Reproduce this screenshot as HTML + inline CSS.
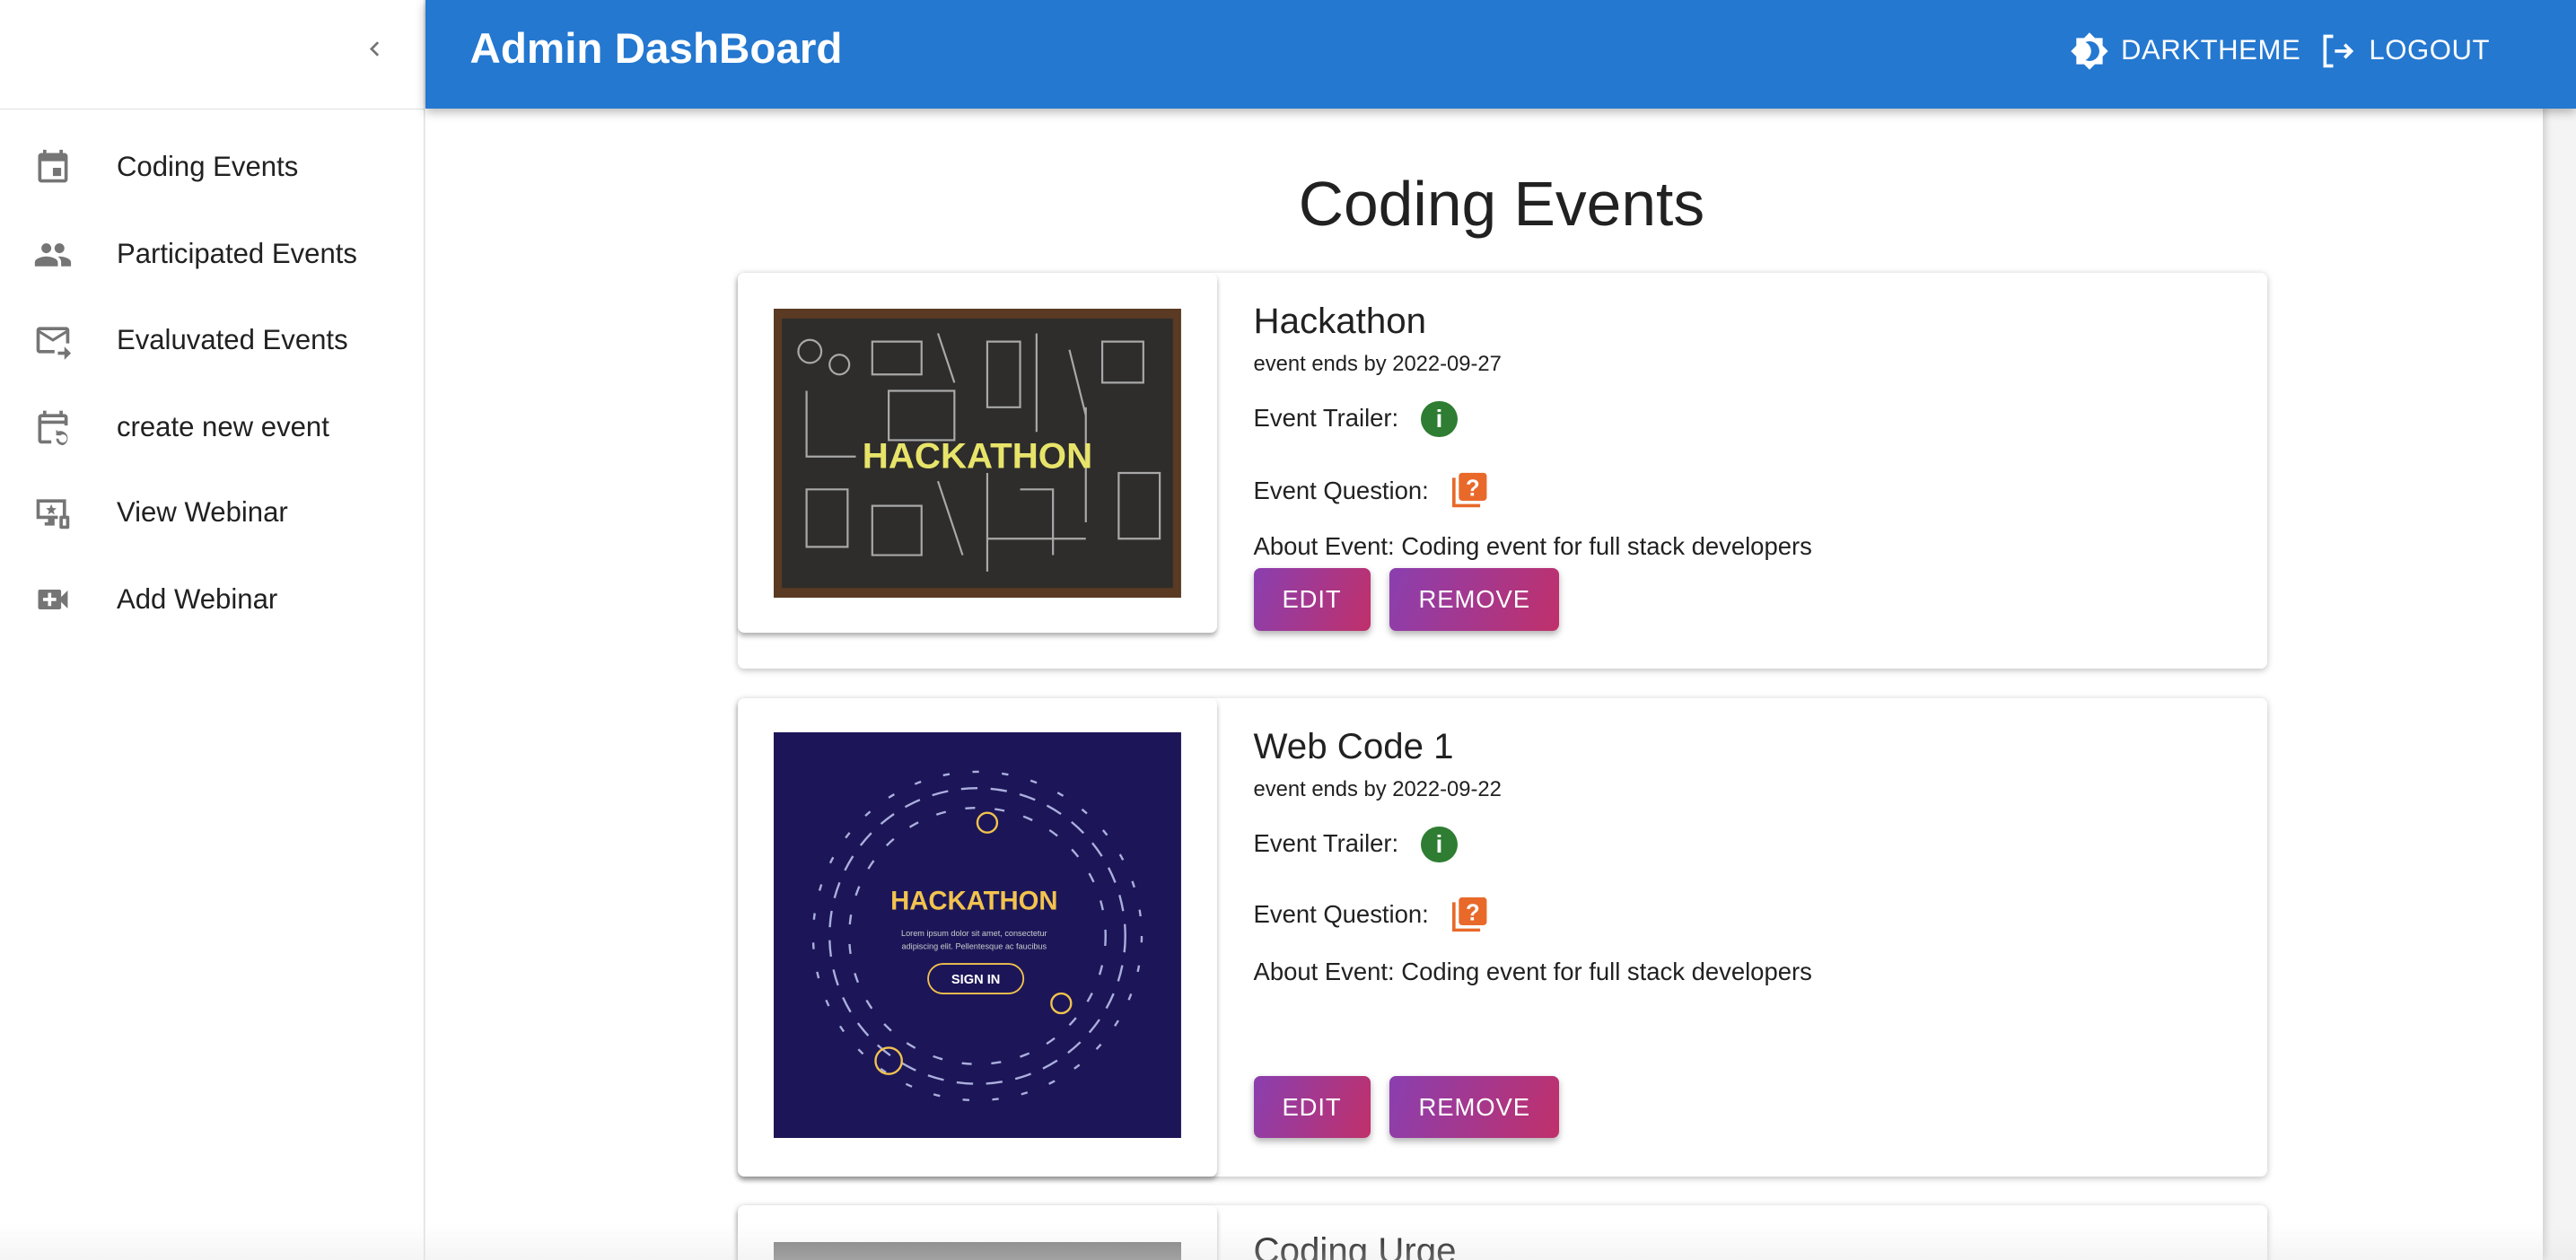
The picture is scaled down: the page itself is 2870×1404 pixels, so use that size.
<!DOCTYPE html>
<html><head><meta charset="utf-8"><style>
html,body{margin:0;padding:0;overflow:hidden;background:#fff}
body{width:2870px;height:1404px}
#w{zoom:1.83036;width:1568px;height:767px;position:relative;font-family:"Liberation Sans",sans-serif;color:#212121;overflow:hidden;background:#f4f4f4}
.abs{position:absolute}
#side{left:0;top:0;width:258px;height:767px;background:#fff;border-right:1px solid #e0e0e0}
#sidetop{left:0;top:0;width:258px;height:66px;border-bottom:1px solid #e0e0e0}
.mi{position:absolute;left:0;width:258px;height:40px}
.mi svg{position:absolute;left:20px;top:9px;width:24px;height:24px;fill:#757575}
.mi span{position:absolute;left:71px;top:11px;font-size:17px}
#main{left:259px;top:0;width:1289px;height:767px;background:#fff;box-shadow:2px 0 4px rgba(0,0,0,.15)}
#bar{left:259px;top:0;width:1309px;height:66px;background:#2478d0;box-shadow:0 2px 6px rgba(0,0,0,.3);color:#fff}
.card{position:absolute;left:449px;width:931px;background:#fff;border-radius:4px;box-shadow:0 1px 4px rgba(0,0,0,.25)}
.ic{position:absolute;left:0;top:0;width:292px;background:#fff;border-radius:4px;box-shadow:0 2px 3px rgba(0,0,0,.3)}
.img{position:absolute;left:22px;top:22px;width:248px}
.t{position:absolute;left:314px;font-size:22px}
.d{position:absolute;left:314px;font-size:13px}
.l{position:absolute;left:314px;font-size:15px}
.btn{position:absolute;height:38px;border-radius:4px;background:linear-gradient(110deg,#8a3fb0,#c0306a);color:#fff;font-size:15px;text-align:center;line-height:38px;letter-spacing:.5px;box-shadow:0 2px 4px rgba(0,0,0,.3)}
.gi{position:absolute;width:22px;height:22px;border-radius:50%;background:#2e7d32;color:#fff;font-weight:bold;font-size:15px;text-align:center;line-height:22px}
.qi{position:absolute;width:22px;height:22px}
</style></head><body><div id="w">
<div id="main" class="abs"></div>
<div id="side" class="abs">
 <div id="sidetop" class="abs"><svg class="abs" style="left:219px;top:21px" width="18" height="18" viewBox="0 0 24 24"><path d="M15.4 7.4 14 6l-6 6 6 6 1.4-1.4L10.8 12z" fill="#757575"/></svg></div>
 <div class="mi" style="top:81px"><svg viewBox="0 0 24 24"><path d="M17 12h-5v5h5v-5zM16 1v2H8V1H6v2H5c-1.1 0-2 .9-2 2v14c0 1.1.9 2 2 2h14c1.1 0 2-.9 2-2V5c0-1.1-.9-2-2-2h-1V1h-2zm3 18H5V8h14v11z"/></svg><span>Coding Events</span></div>
 <div class="mi" style="top:134px"><svg viewBox="0 0 24 24"><path d="M16 11c1.66 0 2.99-1.34 2.99-3S17.66 5 16 5s-3 1.34-3 3 1.34 3 3 3zm-8 0c1.66 0 2.99-1.34 2.99-3S9.66 5 8 5 5 6.34 5 8s1.34 3 3 3zm0 2c-2.33 0-7 1.17-7 3.5V19h14v-2.5c0-2.33-4.67-3.5-7-3.5zm8 0c-.29 0-.62.02-.97.05 1.16.84 1.97 1.97 1.97 3.45V19h6v-2.5c0-2.33-4.67-3.5-7-3.5z"/></svg><span>Participated Events</span></div>
 <div class="mi" style="top:186px"><svg viewBox="0 0 24 24"><path d="M22 14V6c0-1.1-.9-2-2-2H4c-1.1 0-2 .9-2 2v12c0 1.1.9 2 2 2h9v-2H4V8l8 5 8-5v6h2zM12 11 4 6h16l-8 5zm7 5 4 4-4 4v-3h-4v-2h4v-3z"/></svg><span>Evaluvated Events</span></div>
 <div class="mi" style="top:239px"><svg viewBox="0 0 24 24"><path d="M5 8h14V6H5v2zm0 12h6v2H5c-1.1 0-2-.9-2-2V6c0-1.1.9-2 2-2h1V2h2v2h8V2h2v2h1c1.1 0 2 .9 2 2v5h-2V10H5v10zm13 3c-2.2 0-4-1.8-4-4h1.5a2.5 2.5 0 1 0 .7-1.8L17.5 17H14v-3.5l1.1 1.1A4 4 0 1 1 18 23z"/></svg><span>create new event</span></div>
 <div class="mi" style="top:291px"><svg viewBox="0 0 24 24"><path d="M21 14h-1V4H2v12h7v2H7v2h6v-4h2v-2H4V6h14v8h-1a1 1 0 0 0-1 1v6a1 1 0 0 0 1 1h4a1 1 0 0 0 1-1v-6a1 1 0 0 0-1-1zm-1 6h-2v-4h2v4zM11 7l.9 2.3 2.3.2-1.8 1.5.6 2.3-2-1.3-2 1.3.6-2.3-1.8-1.5 2.3-.2z"/></svg><span>View Webinar</span></div>
 <div class="mi" style="top:344px"><svg viewBox="0 0 24 24"><path d="M17 10.5V7c0-.55-.45-1-1-1H4c-.55 0-1 .45-1 1v10c0 .55.45 1 1 1h12c.55 0 1-.45 1-1v-3.5l4 4v-11l-4 4zM14 13h-3v3H9v-3H6v-2h3V8h2v3h3v2z"/></svg><span>Add Webinar</span></div>
</div>
<div id="bar" class="abs">
 <div class="abs" style="left:27px;top:15px;font-size:26px;font-weight:bold">Admin DashBoard</div>
 <svg class="abs" style="left:1001px;top:19px" width="24" height="24" viewBox="0 0 24 24"><path fill="#fff" d="M20 8.69V4h-4.69L12 .69 8.69 4H4v4.69L.69 12 4 15.31V20h4.69L12 23.31 15.31 20H20v-4.69L23.31 12 20 8.69zM12 18c-.89 0-1.74-.2-2.5-.55C11.56 16.5 13 14.42 13 12s-1.44-4.5-3.5-5.45C10.26 6.2 11.11 6 12 6c3.31 0 6 2.69 6 6s-2.69 6-6 6z"/></svg>
 <div class="abs" style="left:1032px;top:21px;font-size:17px;letter-spacing:.3px">DARKTHEME</div>
 <svg class="abs" style="left:1152px;top:19px" width="24" height="24" viewBox="0 0 24 24"><path fill="none" stroke="#fff" stroke-width="2" d="M9 3H4v18h5M10 12h10M16 8l4 4-4 4"/></svg>
 <div class="abs" style="left:1183px;top:21px;font-size:17px;letter-spacing:.3px">LOGOUT</div>
</div>
<div class="abs" style="left:259px;width:1310px;top:102px;text-align:center;font-size:38px">Coding Events</div>

<div class="card" style="top:166px;height:241px">
 <div class="ic" style="height:219px">
  <svg class="img" style="height:176px" viewBox="0 0 248 176"><rect width="248" height="176" fill="#5a3a22"/><rect x="5" y="6" width="238" height="164" fill="#2e2d2c"/>
  <g stroke="#ddd" stroke-width="1.2" fill="none" opacity=".7"><circle cx="22" cy="26" r="7"/><circle cx="40" cy="34" r="6"/><path d="M60 20h30v20H60zM100 15l10 30M130 20h20v40h-20zM160 15v60M180 25l10 40M200 20h25v25h-25zM20 50v40h30M20 110h25v35H20zM60 120h30v30H60zM100 105l15 45M130 100v60M150 110h20v40M190 60v70M210 100h25v40h-25zM70 50h40v30H70zM130 140h60"/></g>
  <text x="124" y="97" text-anchor="middle" font-family="Liberation Sans" font-weight="bold" font-size="22" fill="#e8e46a">HACKATHON</text></svg>
 </div>
 <div class="t" style="top:17px">Hackathon</div>
 <div class="d" style="top:48px">event ends by 2022-09-27</div>
 <div class="l" style="top:80px">Event Trailer:</div><div class="gi" style="left:416px;top:78px">i</div>
 <div class="l" style="top:124px">Event Question:</div>
 <svg class="qi" style="left:435px;top:121px" viewBox="0 0 22 22"><path d="M1 4v17h16" fill="none" stroke="#e8692a" stroke-width="2"/><rect x="4" y="1" width="17" height="17" rx="2" fill="#e8692a"/><text x="12.5" y="15" text-anchor="middle" font-family="Liberation Sans" font-weight="bold" font-size="14" fill="#fff">?</text></svg>
 <div class="l" style="top:158px">About Event: Coding event for full stack developers</div>
 <div class="btn" style="left:314px;top:180px;width:71px">EDIT</div>
 <div class="btn" style="left:397px;top:180px;width:103px">REMOVE</div>
</div>

<div class="card" style="top:425px;height:291px">
 <div class="ic" style="height:291px">
  <svg class="img" style="height:247px;top:21px" viewBox="0 0 248 247"><rect width="248" height="247" fill="#1c1658"/>
  <g fill="none" stroke="#cfd6ff" stroke-width="1.3" opacity=".8"><circle cx="124" cy="124" r="90" stroke-dasharray="10 8"/><circle cx="124" cy="124" r="78" stroke-dasharray="6 12"/><circle cx="124" cy="124" r="100" stroke-dasharray="4 14"/></g>
  <g fill="none" stroke="#f2c34e" stroke-width="1.3"><circle cx="130" cy="55" r="6"/><circle cx="70" cy="200" r="8"/><circle cx="175" cy="165" r="6"/></g>
  <text x="122" y="108" text-anchor="middle" font-family="Liberation Sans" font-weight="bold" font-size="16" fill="#f2c34e">HACKATHON</text>
  <text x="122" y="124" text-anchor="middle" font-family="Liberation Sans" font-size="5" fill="#ccc">Lorem ipsum dolor sit amet, consectetur</text>
  <text x="122" y="132" text-anchor="middle" font-family="Liberation Sans" font-size="5" fill="#ccc">adipiscing elit. Pellentesque ac faucibus</text>
  <rect x="94" y="141" width="58" height="18" rx="9" fill="none" stroke="#f2c34e"/><text x="123" y="153" text-anchor="middle" font-family="Liberation Sans" font-size="8" font-weight="bold" fill="#fff">SIGN IN</text></svg>
 </div>
 <div class="t" style="top:17px">Web Code 1</div>
 <div class="d" style="top:48px">event ends by 2022-09-22</div>
 <div class="l" style="top:80px">Event Trailer:</div><div class="gi" style="left:416px;top:78px">i</div>
 <div class="l" style="top:123px">Event Question:</div>
 <svg class="qi" style="left:435px;top:120px" viewBox="0 0 22 22"><path d="M1 4v17h16" fill="none" stroke="#e8692a" stroke-width="2"/><rect x="4" y="1" width="17" height="17" rx="2" fill="#e8692a"/><text x="12.5" y="15" text-anchor="middle" font-family="Liberation Sans" font-weight="bold" font-size="14" fill="#fff">?</text></svg>
 <div class="l" style="top:158px">About Event: Coding event for full stack developers</div>
 <div class="btn" style="left:314px;top:230px;width:71px">EDIT</div>
 <div class="btn" style="left:397px;top:230px;width:103px">REMOVE</div>
</div>

<div class="card" style="top:734px;height:100px">
 <div class="ic" style="height:100px"><div class="img" style="height:60px;background:#808080"></div></div>
 <div class="t" style="top:15px">Coding Urge</div>
</div>
<div class="abs" style="left:0;top:745px;width:1568px;height:22px;background:linear-gradient(rgba(255,255,255,0),rgba(225,225,225,.35))"></div>
</div></body></html>
